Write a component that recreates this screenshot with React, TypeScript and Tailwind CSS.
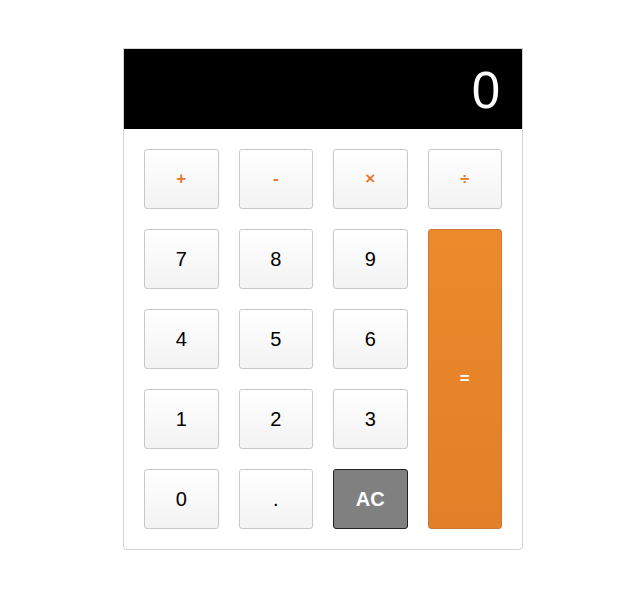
import React from "react";

const Btn = ({ children, cls = "" }: { children: React.ReactNode; cls?: string }) => (
  <button
    className={`h-[60px] rounded-[3px] border border-[#c8c8c8] bg-gradient-to-b from-white to-[#f3f3f3] flex items-center justify-center ${cls}`}
  >
    {children}
  </button>
);

export default function App() {
  return (
    <div className="w-[634px] h-[612px] bg-white" style={{ fontFamily: '"Liberation Sans", Arial, sans-serif' }}>
      <div className="pt-[48px] pl-[123px]">
        <div className="w-[400px] border border-[#d4d4d4] rounded-b-[4px] bg-white">
          <div className="h-[80px] bg-black flex items-center justify-end pr-[22px] pt-[2px]">
            <span className="text-white text-[51px] leading-none font-light">0</span>
          </div>
          <div className="p-[20px] grid grid-cols-4 gap-[20px]">
            <Btn cls="text-[#e5782f] text-[17px] font-bold">+</Btn>
            <Btn cls="text-[#e5782f] text-[17px] font-bold">-</Btn>
            <Btn cls="text-[#e5782f] text-[17px] font-bold">×</Btn>
            <Btn cls="text-[#e5782f] text-[17px] font-bold">÷</Btn>
            <Btn cls="text-[20px] text-black">7</Btn>
            <Btn cls="text-[20px] text-black">8</Btn>
            <Btn cls="text-[20px] text-black">9</Btn>
            <button className="row-span-4 rounded-[3px] border border-[#c97a3a] bg-gradient-to-b from-[#ec8a2c] to-[#e37f28] text-white text-[17px] font-bold flex items-center justify-center">
              =
            </button>
            <Btn cls="text-[20px] text-black">4</Btn>
            <Btn cls="text-[20px] text-black">5</Btn>
            <Btn cls="text-[20px] text-black">6</Btn>
            <Btn cls="text-[20px] text-black">1</Btn>
            <Btn cls="text-[20px] text-black">2</Btn>
            <Btn cls="text-[20px] text-black">3</Btn>
            <Btn cls="text-[20px] text-black">0</Btn>
            <Btn cls="text-[20px] text-black">.</Btn>
            <button className="h-[60px] rounded-[3px] border border-[#222] bg-[#808080] text-white text-[20px] font-bold flex items-center justify-center">
              AC
            </button>
          </div>
        </div>
      </div>
    </div>
  );
}
